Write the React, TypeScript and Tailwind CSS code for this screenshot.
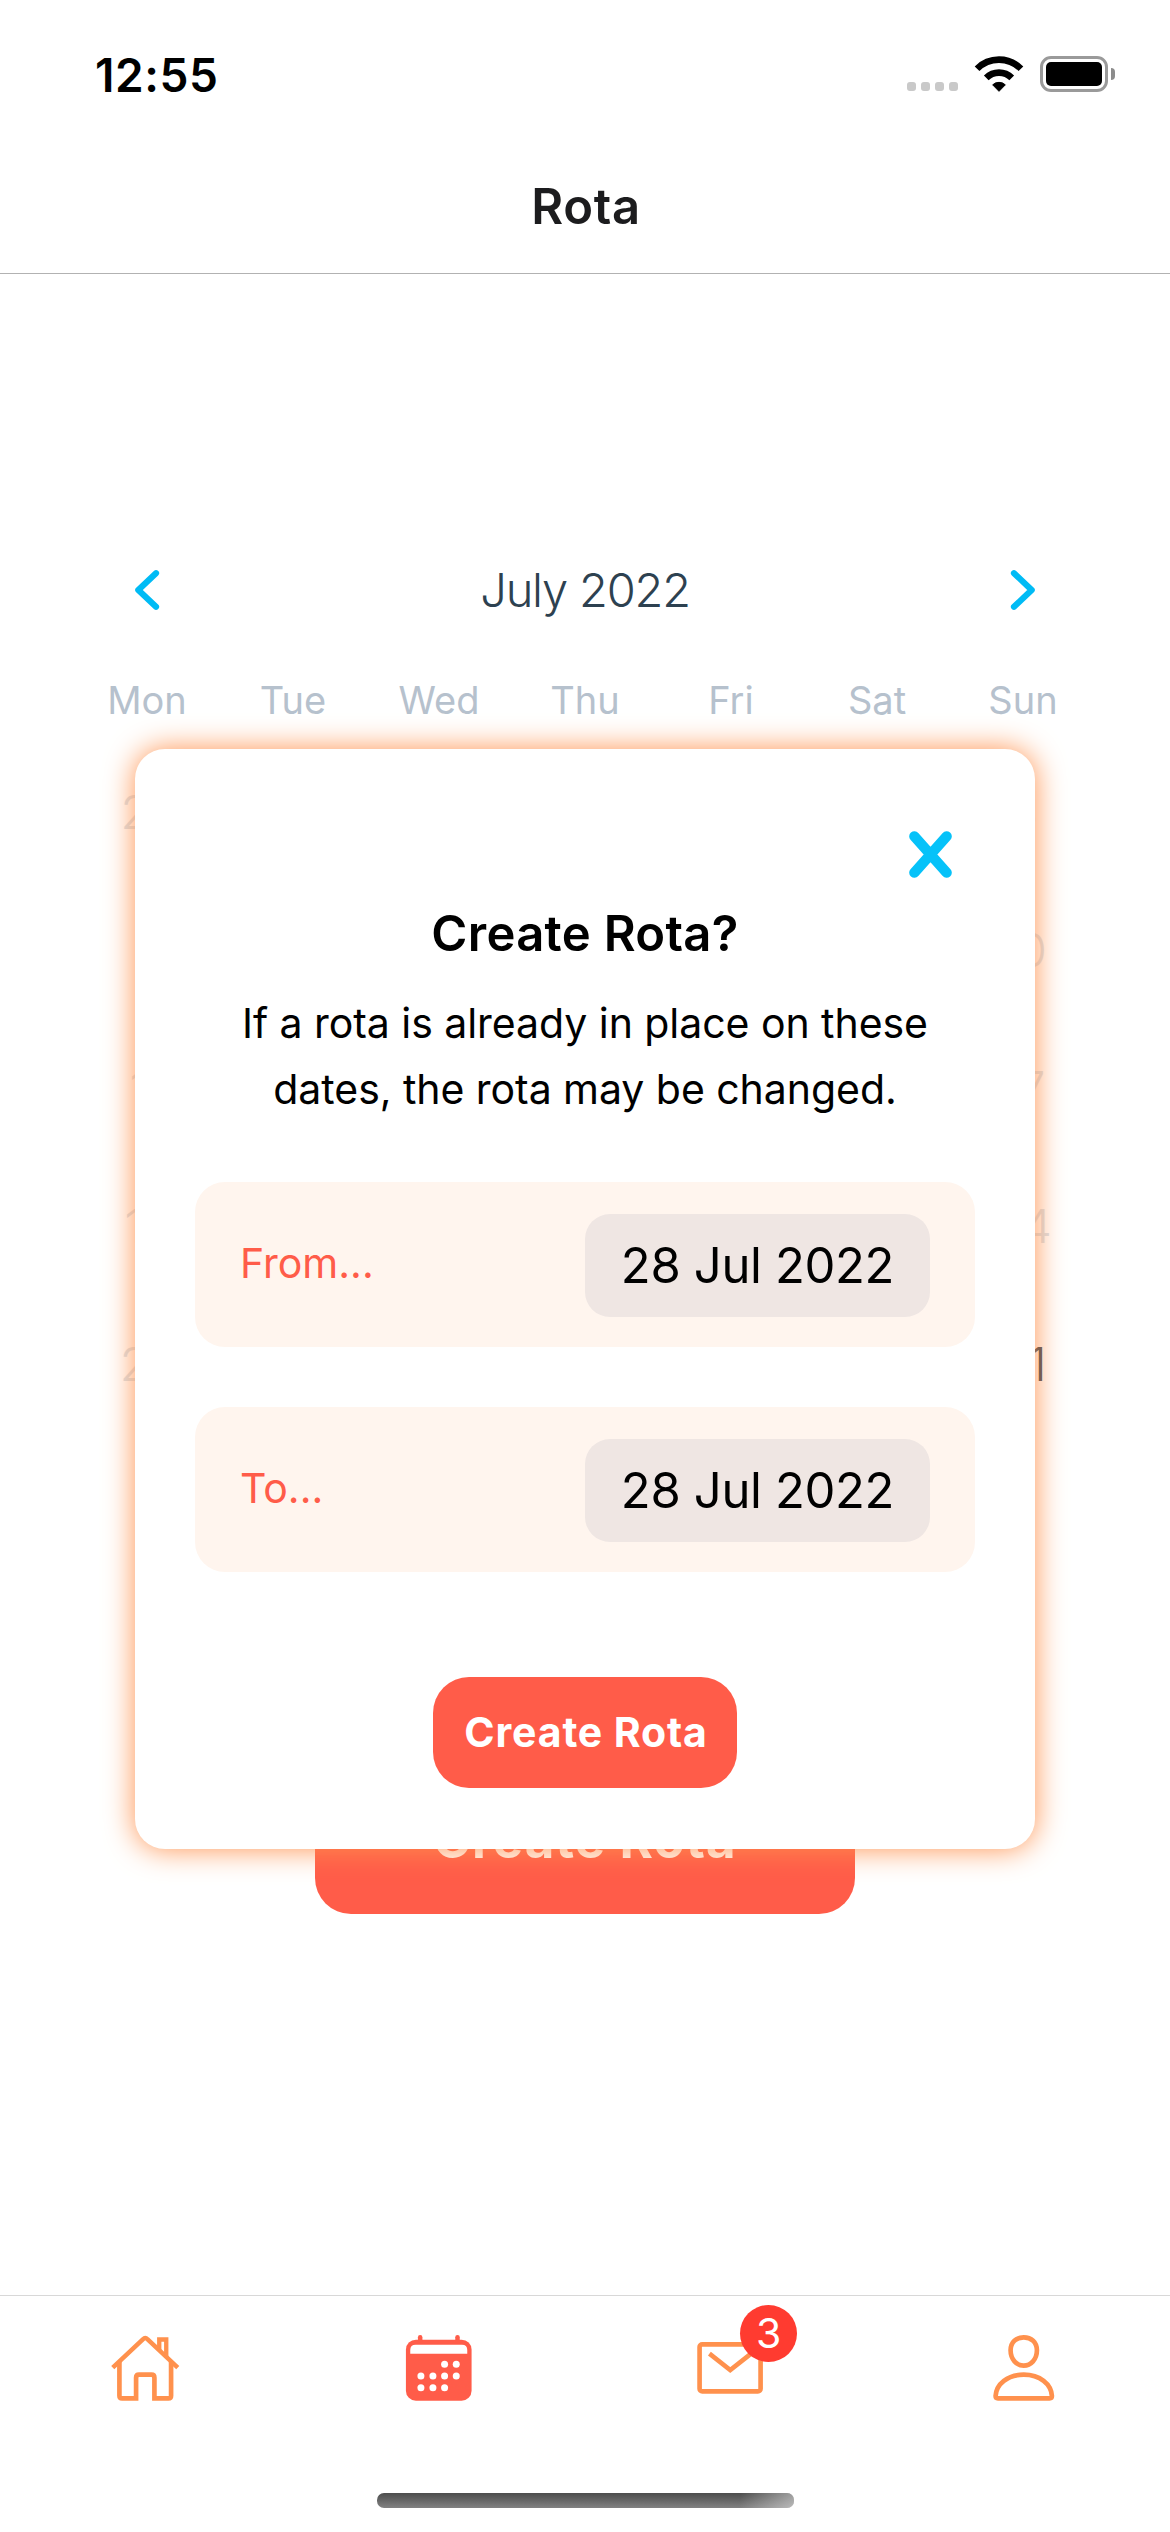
import type { ReactNode } from 'react';

const weekdays = ['Mon', 'Tue', 'Wed', 'Thu', 'Fri', 'Sat', 'Sun'];

const days: { label: number; enabled: boolean }[] = [
  27, 28, 29, 30, 1, 2, 3, 4, 5, 6, 7, 8, 9, 10, 11, 12, 13, 14, 15, 16, 17, 18, 19, 20, 21, 22, 23, 24, 25, 26, 27, 28,
  29, 30, 31,
].map((label, i) => ({ label, enabled: i > 30 }));

function StatusBar() {
  return (
    <div className="flex h-[141px] items-start justify-between pl-[95px] pr-[55px]">
      <span className="mt-[45px] text-[46px] font-semibold leading-[60px] tracking-[0.6px] text-black">12:55</span>
      <div className="mt-[55px] flex">
        <div className="mt-[27px] flex gap-[5px]">
          <i className="h-[9px] w-[9px] rounded-[3px] bg-[#c9c9c9]" />
          <i className="h-[9px] w-[9px] rounded-[3px] bg-[#c9c9c9]" />
          <i className="h-[9px] w-[9px] rounded-[3px] bg-[#c9c9c9]" />
          <i className="h-[9px] w-[9px] rounded-[3px] bg-[#c9c9c9]" />
        </div>
        <svg className="ml-[16px] h-[38px] w-[50px]" viewBox="282 72 150 114" fill="none">
          <path d="M291.2 113.2A93 93 0 0 1 422.8 113.2" stroke="#000" strokeWidth="20" />
          <path d="M318.8 140.8A54 54 0 0 1 395.2 140.8" stroke="#000" strokeWidth="20" />
          <path
            d="M338 161.5A28 28 0 0 1 376 161.5L357 181Z"
            fill="#000"
            stroke="#000"
            strokeWidth="3"
            strokeLinejoin="round"
          />
        </svg>
        <div className="ml-[16px] mt-[1px] flex h-[36px] items-center gap-[3px]">
          <div className="h-[36px] w-[68px] rounded-[11px] border-[3px] border-[#9a9a9a] p-[3px]">
            <div className="h-full rounded-[5px] bg-black" />
          </div>
          <div className="h-[12px] w-[4px] rounded-r-[4px] bg-[#8c8c8c]" />
        </div>
      </div>
    </div>
  );
}

function Chevron({ d }: { d: string }) {
  return (
    <svg className="h-[42px] w-[26px]" viewBox="0 0 26 42" fill="none">
      <path d={d} stroke="#00bbf5" strokeWidth="6.2" strokeLinecap="round" strokeLinejoin="round" />
    </svg>
  );
}

function Calendar() {
  return (
    <section className="mt-[266px] px-[74px]">
      <div className="flex h-[100px] items-center justify-between px-[60px]">
        <Chevron d="M22 4.2L4.3 21L22 37.8" />
        <h2 className="text-[47px] font-light tracking-[-1.2px] text-[#2d4150]">July 2022</h2>
        <Chevron d="M4 4.2L21.7 21L4 37.8" />
      </div>
      <div className="mt-[30px] grid h-[60px] grid-cols-7 items-center text-center text-[38px] text-[#b6c1cd]">
        {weekdays.map((day) => (
          <span key={day}>{day}</span>
        ))}
      </div>
      <div className="mt-[13px] grid auto-rows-[138px] grid-cols-7 items-center text-center text-[47px] font-light tracking-[-1px]">
        {days.map((day, i) => (
          <span key={i} className={day.enabled ? 'text-[#2d4150]' : 'text-[#d9e1e8]'}>
            {day.label}
          </span>
        ))}
      </div>
    </section>
  );
}

function DateField({ label, value }: { label: string; value: string }) {
  return (
    <div className="flex h-[165px] items-center justify-between rounded-[30px] bg-[#fff5ee] px-[45px]">
      <span className="-mt-[2px] text-[41px] text-[#ff5c49]">{label}</span>
      <span className="mt-[2px] flex h-[103px] w-[345px] items-center justify-center rounded-[25px] bg-[#efe6e3] text-[49px] tracking-[-0.35px] text-black">
        {value}
      </span>
    </div>
  );
}

function Dialog() {
  return (
    <div className="absolute left-[135px] top-[749px] flex h-[1100px] w-[900px] flex-col rounded-[30px] bg-white px-[60px] pt-[82px] shadow-[0_0_30px_#ff914d]">
      <button className="mr-[23px] self-end" aria-label="Close">
        <svg className="h-[47px] w-[43px]" viewBox="0 0 43 47" fill="none">
          <path d="M5.4 5.4L37.6 41.6M37.6 5.4L5.4 41.6" stroke="#06c2f9" strokeWidth="10.4" strokeLinecap="round" />
        </svg>
      </button>
      <h3 className="mt-[26px] text-center text-[49px] font-semibold leading-[60px] tracking-[0.3px] text-black">
        Create Rota?
      </h3>
      <p className="mt-[27px] text-center text-[41px] leading-[65.5px] tracking-[-0.05px] text-black">
        If a rota is already in place on these
        <br />
        dates, the rota may be changed.
      </p>
      <div className="mt-[60px] flex flex-col gap-[60px]">
        <DateField label="From..." value="28 Jul 2022" />
        <DateField label="To..." value="28 Jul 2022" />
      </div>
      <button className="mt-[105px] h-[111px] w-[304px] self-center rounded-[36px] bg-[#ff5c49] pl-[2px] text-[41px] font-bold tracking-[0.85px] text-white">
        Create Rota
      </button>
    </div>
  );
}

function Tab({ children }: { children: ReactNode }) {
  return (
    <div className="flex flex-1 justify-center">
      <div className="relative h-[72px] w-[72px]">{children}</div>
    </div>
  );
}

function TabBar() {
  return (
    <nav className="flex h-[198px] border-t border-[#d8d8d8] bg-white pt-[36px]">
      <Tab>
        <svg className="h-full w-full" viewBox="90.75 156 216 216" fill="none" stroke="#ff914d" strokeWidth="14">
          <path d="M99 263L190 177.500Q196.500 170.500 203 177.500L294 263" strokeWidth="13.500" />
          <path d="M119 245V347Q119 355 127 355H169V293Q169 284 178 284H215Q224 284 224 293V355H266Q274 355 274 347V245" />
          <path d="M238.500 210V178.500H259.500V233" strokeWidth="13" />
        </svg>
      </Tab>
      <Tab>
        <svg className="h-full w-full" viewBox="968.25 156 216 216">
          <rect x="977" y="179" width="197" height="183" rx="30" fill="#ff5c49" />
          <rect x="1013" y="165" width="13.500" height="24" rx="6.500" fill="#ff5c49" />
          <rect x="1125" y="165" width="13.500" height="24" rx="6.500" fill="#ff5c49" />
          <g fill="#fff">
            <path d="M990 221V210Q990 194 1006 194H1145Q1161 194 1161 210V221Z" />
            <circle cx="1093" cy="253" r="10.500" />
            <circle cx="1128" cy="253" r="10.500" />
            <circle cx="1022" cy="288" r="10.500" />
            <circle cx="1058" cy="288" r="10.500" />
            <circle cx="1093" cy="288" r="10.500" />
            <circle cx="1128" cy="288" r="10.500" />
            <circle cx="1022" cy="323" r="10.500" />
            <circle cx="1058" cy="323" r="10.500" />
            <circle cx="1093" cy="323" r="10.500" />
          </g>
        </svg>
      </Tab>
      <Tab>
        <svg className="h-full w-full" viewBox="105.75 156 216 216" fill="none" stroke="#ff914d" strokeWidth="14">
          <rect x="119.500" y="193" width="183" height="141" rx="8" />
          <path d="M149 221L211.500 270L274 221" />
        </svg>
        <span className="absolute -top-[27px] left-[45px] flex h-[57px] w-[57px] items-center justify-center rounded-full bg-[#ff3b30] text-[41px] leading-none text-white">
          3
        </span>
      </Tab>
      <Tab>
        <svg className="h-full w-full" viewBox="983.25 156 216 216" fill="none" stroke="#ff914d" strokeWidth="14">
          <path d="M1090.500 172C1113 172 1130 186 1130 211C1130 238 1112 257 1090.500 257C1069 257 1051 238 1051 211C1051 186 1068 172 1090.500 172Z" />
          <path d="M1006 348C1008 312 1042 284 1090.500 284C1139 284 1173 312 1175 348Q1175 355 1168 355H1013Q1006 355 1006 348Z" />
        </svg>
      </Tab>
    </nav>
  );
}

export default function App() {
  return (
    <div className="relative flex h-[2532px] w-[1170px] flex-col overflow-hidden bg-white font-['Inter',sans-serif]">
      <StatusBar />
      <header className="flex h-[133px] shrink-0 items-center justify-center border-b border-[#b2b2b2] pl-[2px] text-[49px] font-semibold tracking-[0.7px] text-[#1c1c1e]">
        Rota
      </header>
      <Calendar />
      <button className="mt-[333px] h-[148px] w-[540px] shrink-0 self-center rounded-[36px] bg-[#ff5c49] text-[51px] font-bold tracking-[1.15px] text-white">
        Create Rota
      </button>
      <div className="mt-auto">
        <TabBar />
        <div className="flex h-[39px] justify-center">
          <div className="h-[15px] w-[417px] overflow-hidden rounded-[7px] bg-linear-to-b from-[#4d4d4d] to-[#828282]">
            <div className="ml-auto h-full w-[54px] bg-linear-to-r from-white/0 to-white/45" />
          </div>
        </div>
      </div>
      <Dialog />
    </div>
  );
}
